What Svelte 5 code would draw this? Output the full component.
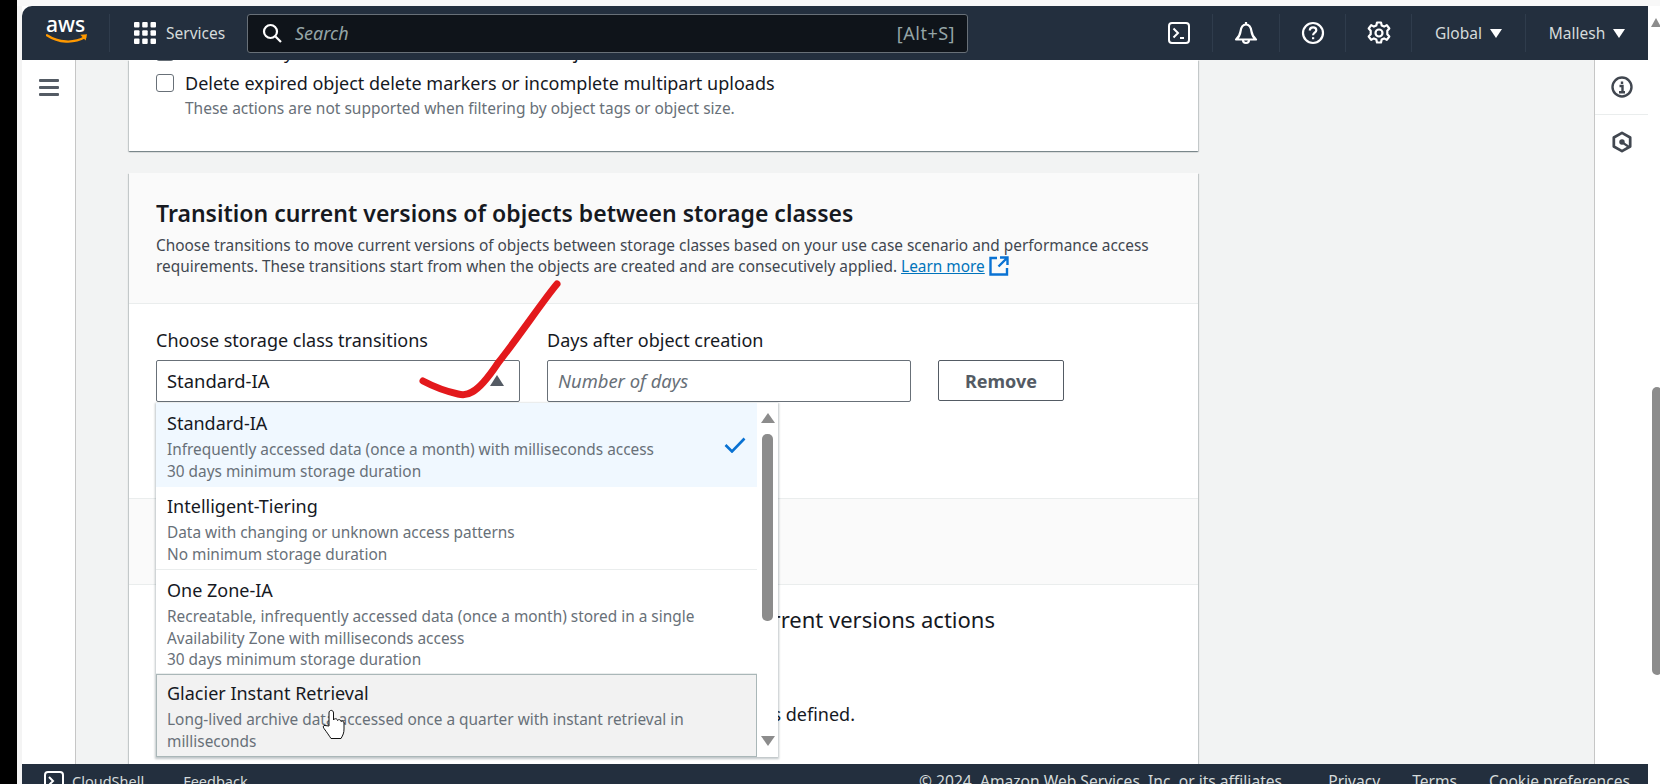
<script lang="ts">
  const options = [
    { title: 'Standard-IA', lines: ['Infrequently accessed data (once a month) with milliseconds access', '30 days minimum storage duration'], state: 'selected' },
    { title: 'Intelligent-Tiering', lines: ['Data with changing or unknown access patterns', 'No minimum storage duration'], state: '' },
    { title: 'One Zone-IA', lines: ['Recreatable, infrequently accessed data (once a month) stored in a single', 'Availability Zone with milliseconds access', '30 days minimum storage duration'], state: '' },
    { title: 'Glacier Instant Retrieval', lines: ['Long-lived archive data accessed once a quarter with instant retrieval in', 'milliseconds'], state: 'hovered' }
  ];
</script>

<div class="page">
  <div class="letterbox"></div>
  <div class="window">
    <div class="topstrip"></div>
    <div class="frame">
      <div class="gutter"></div>
      <div class="app">
        <header class="topbar">
          <div class="logo">
            <span class="logo-text">aws</span>
            <svg class="smile" viewBox="0 0 44 12" width="42" height="12">
              <path d="M1 2c12 8 28 9 40 2" fill="none" stroke="#f90" stroke-width="2.4" stroke-linecap="round"/>
              <path d="M36 1.500l7-.5-1.500 6.500z" fill="#f90"/>
            </svg>
          </div>
          <div class="services">
            <svg viewBox="0 0 22 22" width="22" height="22" fill="#fff">
              <rect x="0" y="0" width="5.500" height="5.500" rx="1"/><rect x="8.200" y="0" width="5.500" height="5.500" rx="1"/><rect x="16.500" y="0" width="5.500" height="5.500" rx="1"/>
              <rect x="0" y="8.200" width="5.500" height="5.500" rx="1"/><rect x="8.200" y="8.200" width="5.500" height="5.500" rx="1"/><rect x="16.500" y="8.200" width="5.500" height="5.500" rx="1"/>
              <rect x="0" y="16.500" width="5.500" height="5.500" rx="1"/><rect x="8.200" y="16.500" width="5.500" height="5.500" rx="1"/><rect x="16.500" y="16.500" width="5.500" height="5.500" rx="1"/>
            </svg>
            <span>Services</span>
          </div>
          <div class="search">
            <svg viewBox="0 0 20 20" width="20" height="20" fill="none" stroke="#fff" stroke-width="2.200">
              <circle cx="8.500" cy="8.500" r="6.500"/><path d="M13.500 13.500l5.500 5.500"/>
            </svg>
            <span class="search-text">Search</span>
            <span class="search-key">[Alt+S]</span>
          </div>
          <div class="actions">
            <div class="action">
              <svg viewBox="0 0 22 22" width="22" height="22" fill="none" stroke="#fff" stroke-width="2">
                <rect x="1" y="1" width="20" height="20" rx="3"/><path d="M5.500 6.500l4.500 4.500-4.500 4.500M12 16h4"/>
              </svg>
            </div>
            <div class="action bell">
              <svg viewBox="0 0 24 24" width="24" height="24" fill="none" stroke="#fff" stroke-width="2.200" stroke-linejoin="round">
                <path d="M2 18.500c3-2.500 4-4 4.500-8C7 6.500 9 3.500 12 3.500s5 3 5.500 7c.5 4 1.500 5.500 4.500 8z"/><path d="M12 1v2.500M9 19a3 3 0 0 0 6 0"/>
              </svg>
            </div>
            <div class="action">
              <svg viewBox="0 0 24 24" width="24" height="24" fill="none" stroke="#fff" stroke-width="2.200">
                <circle cx="12" cy="12" r="10"/><path d="M8.800 9.500c0-2 1.500-3.200 3.300-3.200s3.200 1.200 3.200 2.900c0 2.500-3.200 2.500-3.200 5"/><path d="M12.100 16.200v2"/>
              </svg>
            </div>
            <div class="action">
              <svg viewBox="0 0 24 24" width="24" height="24" fill="none" stroke="#fff" stroke-width="2.200" stroke-linejoin="round">
                <path d="M10 1.500h4l.7 3 2.400 1.100 2.700-1.500 2.500 3.400-2 2.300v3.400l2 2.300-2.500 3.400-2.700-1.500-2.400 1.100-.7 3h-4l-.7-3-2.400-1.100-2.700 1.500-2.500-3.400 2-2.300v-3.400l-2-2.300 2.500-3.400 2.700 1.500 2.400-1.100z"/><circle cx="12" cy="12" r="3.500"/>
              </svg>
            </div>
            <div class="action menu global">Global <span class="tri"></span></div>
            <div class="action menu user">Mallesh <span class="tri"></span></div>
          </div>
        </header>

        <div class="main">
          <nav class="sidenav">
            <svg viewBox="0 0 20 17" width="20" height="17" fill="#545b64">
              <rect width="20" height="3" rx="1"/><rect y="7" width="20" height="3" rx="1"/><rect y="14" width="20" height="3" rx="1"/>
            </svg>
          </nav>

          <div class="content">
            <section class="card first">
              <div class="check-row clipped"><span class="box gray"></span><span>Permanently delete noncurrent versions of objects</span></div>
              <div class="check-row"><span class="box"></span><span>Delete expired object delete markers or incomplete multipart uploads</span></div>
              <p class="hint">These actions are not supported when filtering by object tags or object size.</p>
            </section>

            <section class="card second">
              <div class="card-head">
                <h2>Transition current versions of objects between storage classes</h2>
                <p>Choose transitions to move current versions of objects between storage classes based on your use case scenario and performance access requirements. These transitions start from when the objects are created and are consecutively applied. <span class="link">Learn more</span>
                  <svg class="ext" viewBox="0 0 20 20" width="20" height="20" fill="none" stroke="#0972d3" stroke-width="2.400">
                    <path d="M8 2H1.500v16.500H18V12M11 1.500h7.500V9M18 2l-8.500 8.500"/>
                  </svg>
                </p>
              </div>
              <div class="card-body">
                <div class="field">
                  <span class="label">Choose storage class transitions</span>
                  <div class="select">Standard-IA<span class="caret"></span></div>
                  <div class="dropdown">
                    <ul>
                      {#each options as opt}
                        <li class={opt.state}>
                          <div class="opt-title">{opt.title}</div>
                          {#each opt.lines as line}<div class="opt-line">{line}</div>{/each}
                          {#if opt.state === 'selected'}
                            <svg class="tick" viewBox="0 0 22 16" width="22" height="16" fill="none" stroke="#0972d3" stroke-width="2.600">
                              <path d="M1.500 8l6.500 6.500L20.500 1.500"/>
                            </svg>
                          {/if}
                        </li>
                      {/each}
                    </ul>
                    <div class="dd-scroll">
                      <span class="arrow up"></span>
                      <span class="dd-thumb"></span>
                      <span class="arrow down"></span>
                    </div>
                  </div>
                </div>
                <div class="field">
                  <span class="label">Days after object creation</span>
                  <div class="input">Number of days</div>
                </div>
                <button class="remove">Remove</button>
              </div>
              <div class="card-foot"></div>
              <div class="summary">
                <h3>Noncurrent versions actions</h3>
                <p>No noncurrent versions actions defined.</p>
              </div>
            </section>
          </div>

          <aside class="rightbar">
            <div class="rb-item">
              <svg viewBox="0 0 22 22" width="22" height="22" fill="none" stroke="#414750" stroke-width="2.400">
                <circle cx="11" cy="11" r="9.500"/><path d="M11 5.500v2.500M8.500 10h3v6M8 16.300h6"/>
              </svg>
            </div>
            <div class="rb-item">
              <svg viewBox="0 0 22 24" width="20" height="22" fill="none" stroke="#414750" stroke-width="3" stroke-linejoin="round">
                <path d="M11 2l9 5v10l-9 5-9-5V7z"/><circle cx="11" cy="12" r="3" fill="#414750" stroke="none"/><path d="M12 13l6 4" stroke-width="2.500"/>
              </svg>
            </div>
          </aside>
        </div>

        <footer class="bottombar">
          <div class="foot-left">
            <svg viewBox="0 0 20 20" width="20" height="20" fill="none" stroke="#fff" stroke-width="2">
              <rect x="1" y="1" width="18" height="18" rx="3"/><path d="M5 6l4 4-4 4"/>
            </svg>
            <span>CloudShell</span>
            <span class="feedback">Feedback</span>
          </div>
          <div class="foot-right">
            <span>© 2024, Amazon Web Services, Inc. or its affiliates.</span>
            <span class="privacy">Privacy</span>
            <span>Terms</span>
            <span>Cookie preferences</span>
          </div>
        </footer>
      </div>
      <div class="pagescroll">
        <span class="ps-arrow"></span>
        <span class="ps-thumb"></span>
      </div>
    </div>
  </div>

  <svg class="scribble" viewBox="0 0 1660 784" width="1660" height="784">
    <path d="M557 284C545 298 520 335 498 363C490 375 480 388 472 392Q466 396 458 394Q440 390 423 381" fill="none" stroke="#e3191c" stroke-width="7" stroke-linecap="round" stroke-linejoin="round"/>
    <path d="M329 726V713c0-3.500 4.500-3.500 4.500 0v7c1-2 4-1.500 4 .5c1-1.500 3.500-1 3.500 1c1-1 3-.5 3 1.500v6c0 4-1 6-3 9.500h-10c-2-3-4-6-7-10c-1.500-2-.5-3.500 1-3z" fill="#fff" stroke="#111" stroke-width="1"/>
  </svg>
</div>

<style>
  :global(body) {
    margin: 0;
    background: #fff;
  }

  .page {
    position: relative;
    display: flex;
    width: 1660px;
    height: 784px;
    overflow: hidden;
    font-family: "Noto Sans", "Liberation Sans", sans-serif;
    color: #16191f;
  }

  .letterbox {
    width: 17px;
    flex: none;
    background: #000;
  }

  .window {
    flex: 1;
    display: flex;
    flex-direction: column;
    min-width: 0;
  }

  .topstrip {
    height: 6px;
    flex: none;
    background: #f8f8f8;
  }

  .frame {
    flex: 1;
    display: flex;
    min-height: 0;
  }

  .gutter {
    width: 5px;
    flex: none;
    background: #f4f4f4;
  }

  .app {
    width: 1626px;
    flex: none;
    display: flex;
    flex-direction: column;
    min-height: 0;
  }

  .topbar {
    height: 54px;
    flex: none;
    display: flex;
    align-items: center;
    background: #232f3e;
    border-top-left-radius: 10px;
    color: #d5dbdb;
    font-size: 15.500px;
  }

  .logo {
    width: 88px;
    height: 38px;
    box-sizing: border-box;
    padding-left: 24px;
    flex: none;
    border-right: 1px solid #2f3c4c;
    position: relative;
  }

  .logo-text {
    display: block;
    color: #fff;
    font-size: 21px;
    line-height: 20px;
    font-weight: 500;
  }

  .smile {
    display: block;
    margin-top: -1px;
  }

  .services {
    display: flex;
    align-items: center;
    gap: 10px;
    margin-left: 24px;
    width: 113px;
    flex: none;
  }

  .search {
    width: 721px;
    height: 39px;
    box-sizing: border-box;
    flex: none;
    display: flex;
    align-items: center;
    padding: 0 12px 0 14px;
    background: #0f141a;
    border: 1px solid #687078;
    border-radius: 3px;
    gap: 13px;
  }

  .search-text {
    font-size: 18px;
    font-style: italic;
    color: #95a5a6;
  }

  .search-key {
    margin-left: auto;
    font-size: 18px;
    letter-spacing: 0.5px;
    color: #95a5a6;
  }

  .actions {
    display: flex;
    align-items: center;
    margin-left: auto;
    height: 38px;
  }

  .action {
    width: 66px;
    height: 38px;
    box-sizing: border-box;
    flex: none;
    display: flex;
    align-items: center;
    justify-content: center;
    border-left: 1px solid #2f3c4c;
  }

  .action:first-child {
    border-left: none;
  }

  .action.bell {
    width: 67px;
  }

  .menu {
    gap: 8px;
  }

  .global {
    width: 114px;
  }

  .user {
    width: 123px;
  }

  .tri {
    width: 0;
    height: 0;
    border-left: 6px solid transparent;
    border-right: 6px solid transparent;
    border-top: 9px solid #fff;
  }

  .main {
    flex: 1;
    display: flex;
    min-height: 0;
    background: #f2f3f3;
  }

  .sidenav {
    width: 54px;
    flex: none;
    box-sizing: border-box;
    background: #fff;
    border-right: 1px solid #c6c6c6;
    padding: 19px 0 0 17px;
  }

  .sidenav svg {
    display: block;
  }

  .content {
    flex: 1;
    min-width: 0;
    overflow: hidden;
    padding-left: 53px;
  }

  .card {
    width: 1069px;
    background: #fff;
    box-shadow: 0 1px 1px 0 rgba(0, 28, 36, 0.3), 1px 1px 1px 0 rgba(0, 28, 36, 0.15), -1px 1px 1px 0 rgba(0, 28, 36, 0.15);
  }

  .first {
    height: 91px;
    box-sizing: border-box;
    padding: 0 27px;
    overflow: hidden;
  }

  .check-row {
    display: flex;
    align-items: center;
    gap: 11px;
    height: 24px;
    font-size: 18px;
  }

  .clipped {
    margin-top: -20px;
    margin-bottom: 6.500px;
  }

  .box {
    width: 16px;
    height: 16px;
    flex: none;
    border: 1.500px solid #687078;
    border-radius: 3px;
    background: #fff;
  }

  .box.gray {
    background: #aab7b8;
  }

  .hint {
    margin: 3.500px 0 0 29px;
    font-size: 15.500px;
    line-height: 20px;
    color: #687078;
  }

  .second {
    margin-top: 22px;
  }

  .card-head {
    height: 131px;
    box-sizing: border-box;
    padding: 25px 27px 0;
    background: #fafafa;
    border-bottom: 1px solid #eaeded;
  }

  .card-head h2 {
    margin: 0;
    font-size: 23px;
    line-height: 30px;
    font-weight: 600;
  }

  .card-head p {
    margin: 6.500px 0 0;
    font-size: 15.400px;
    line-height: 21.500px;
    color: #414750;
  }

  .link {
    color: #0073bb;
    text-decoration: underline;
  }

  .ext {
    vertical-align: -4px;
  }

  .card-body {
    height: 194px;
    box-sizing: border-box;
    padding: 24px 27px 0;
    display: flex;
    align-items: flex-start;
    gap: 27px;
  }

  .field {
    position: relative;
    width: 364px;
    flex: none;
  }

  .label {
    display: block;
    height: 32px;
    line-height: 24px;
    font-size: 18px;
  }

  .select,
  .input {
    height: 42px;
    box-sizing: border-box;
    display: flex;
    align-items: center;
    padding: 0 10px 2px;
    border: 1px solid #687078;
    border-radius: 2px;
    background: #fff;
    font-size: 18.400px;
  }

  .select {
    position: relative;
  }

  .caret {
    position: absolute;
    right: 15px;
    top: 14px;
    width: 0;
    height: 0;
    border-left: 7px solid transparent;
    border-right: 7px solid transparent;
    border-bottom: 11px solid #545b64;
  }

  .input {
    font-style: italic;
    color: #687078;
  }

  .remove {
    width: 126px;
    height: 41px;
    margin: 32px 0 0 0;
    padding: 0;
    font: 700 18px "Noto Sans", "Liberation Sans", sans-serif;
    color: #545b64;
    background: #fff;
    border: 1px solid #545b64;
    border-radius: 2px;
  }

  .dropdown {
    position: absolute;
    left: 0;
    top: 75px;
    width: 622px;
    height: 354px;
    display: flex;
    background: #fff;
    box-shadow: 0 1px 2px 1px rgba(0, 28, 36, 0.25);
    z-index: 2;
  }

  .dropdown ul {
    width: 601px;
    flex: none;
    margin: 0;
    padding: 0;
    list-style: none;
  }

  .dropdown li {
    position: relative;
    box-sizing: border-box;
    padding: 7px 11px 0;
    height: 83px;
    border-bottom: 1px solid #eaeded;
  }

  .dropdown li:nth-child(1) {
    height: 84px;
    padding-top: 8px;
    background: #f0f8ff;
    border-bottom-color: #f0f8ff;
  }

  .dropdown li:nth-child(3) {
    height: 104px;
    padding-top: 8px;
  }

  .dropdown li.hovered {
    height: 83px;
    padding: 6px 10px 0;
    background: #f2f2f2;
    border: 1px solid #aab7b8;
  }

  .opt-title {
    font-size: 18px;
    line-height: 24px;
    margin-bottom: 4px;
  }

  .opt-line {
    font-size: 15.400px;
    line-height: 21.500px;
    color: #687078;
  }

  .tick {
    position: absolute;
    right: 11px;
    top: 34px;
  }

  .dd-scroll {
    flex: 1;
    display: flex;
    flex-direction: column;
    align-items: center;
    padding-top: 10px;
    position: relative;
  }

  .arrow {
    width: 0;
    height: 0;
    border-left: 7px solid transparent;
    border-right: 7px solid transparent;
  }

  .arrow.up {
    border-bottom: 10px solid #8c8c8c;
  }

  .arrow.down {
    position: absolute;
    bottom: 11px;
    border-top: 10px solid #8c8c8c;
  }

  .dd-thumb {
    width: 11px;
    height: 187px;
    margin-top: 11px;
    border-radius: 5px;
    background: #8c8c8c;
  }

  .card-foot {
    height: 85px;
    background: #fafafa;
    border-top: 1px solid #eaeded;
    border-bottom: 1px solid #eaeded;
  }

  .summary {
    height: 200px;
    text-align: right;
    padding: 18px 203px 0 0;
  }

  .summary h3 {
    margin: 0;
    font-size: 22px;
    line-height: 32px;
    font-weight: 400;
  }

  .summary p {
    margin: 67px 140px 0 0;
    font-size: 18px;
    line-height: 24px;
  }

  .rightbar {
    width: 54px;
    flex: none;
    box-sizing: border-box;
    background: #fff;
    border-left: 1px solid #c6c6c6;
  }

  .rb-item {
    height: 54px;
    display: flex;
    align-items: center;
    justify-content: center;
    border-bottom: 1px solid #eaeded;
  }

  .rb-item:last-child {
    border-bottom: none;
  }

  .bottombar {
    height: 20px;
    flex: none;
    overflow: hidden;
    display: flex;
    justify-content: space-between;
    padding: 7px 18px 0 22px;
    box-sizing: border-box;
    background: #232f3e;
    color: #d5dbdb;
    font-size: 14.500px;
    line-height: 20px;
  }

  .foot-left {
    display: flex;
    gap: 8px;
  }

  .feedback {
    margin-left: 31px;
  }

  .foot-right {
    display: flex;
    gap: 32px;
    font-size: 15.600px;
  }

  .privacy {
    margin-left: 10px;
  }

  .pagescroll {
    flex: 1;
    position: relative;
    background: #fff;
  }

  .ps-arrow {
    position: absolute;
    left: 3px;
    top: 12px;
    width: 0;
    height: 0;
    border-left: 5px solid transparent;
    border-right: 5px solid transparent;
    border-bottom: 9px solid #8c8c8c;
  }

  .ps-thumb {
    position: absolute;
    left: 4px;
    top: 381px;
    width: 10px;
    height: 288px;
    border-radius: 5px;
    background: #8c8c8c;
  }

  .scribble {
    position: absolute;
    left: 0;
    top: 0;
    pointer-events: none;
    z-index: 5;
  }
</style>
